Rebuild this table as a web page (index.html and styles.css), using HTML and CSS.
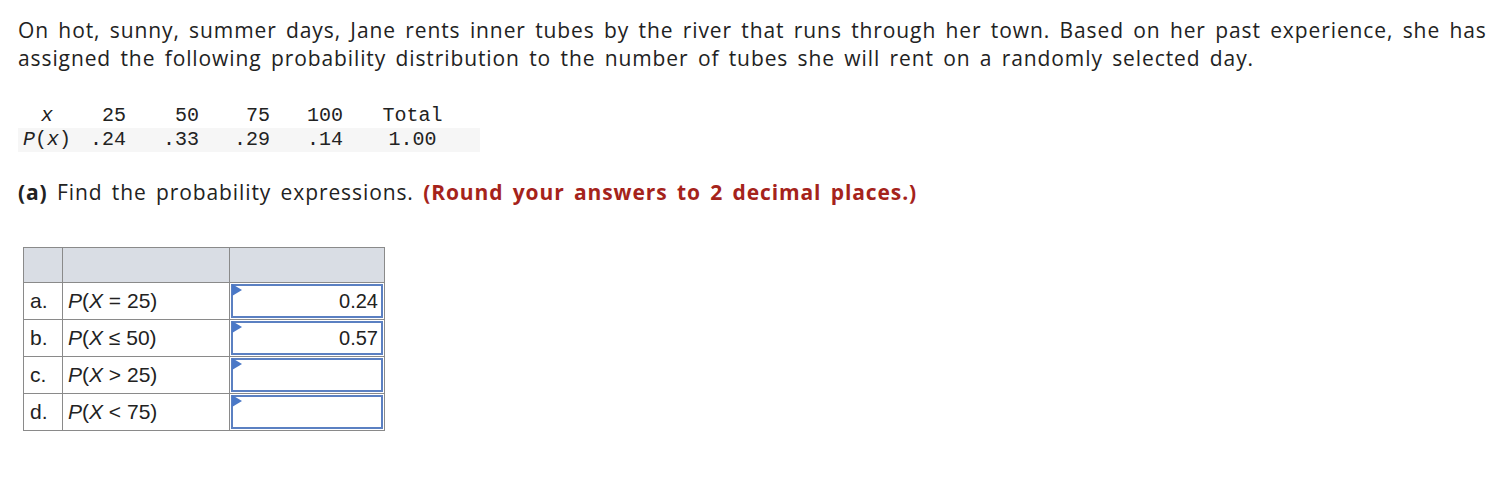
FILE: index.html
```html
<!DOCTYPE html>
<html>
<head>
<meta charset="utf-8">
<link rel="stylesheet" href="styles.css">
</head>
<body>
<div class="page">
  <p class="intro">On hot, sunny, summer days, Jane rents inner tubes by the river that runs through her town. Based on her past experience, she has assigned the following probability distribution to the number of tubes she will rent on a randomly selected day.</p>

  <div class="dist">
    <div class="drow">
      <span class="c0"><i>x</i></span>
      <span class="num">25</span>
      <span class="num">50</span>
      <span class="num">75</span>
      <span class="num">100</span>
      <span class="tot">Total</span>
    </div>
    <div class="drow shaded">
      <span class="c0"><i>P</i>(<i>x</i>)</span>
      <span class="num">.24</span>
      <span class="num">.33</span>
      <span class="num">.29</span>
      <span class="num">.14</span>
      <span class="tot">1.00</span>
    </div>
  </div>

  <p class="question"><b>(a)</b> Find the probability expressions. <b class="red">(Round your answers to 2 decimal places.)</b></p>

  <table class="answers">
    <tr class="head"><th></th><th></th><th></th></tr>
    <tr>
      <td class="lbl">a.</td>
      <td class="expr"><i>P</i>(<i>X</i> = 25)</td>
      <td class="inp"><div class="box"><span class="flag"></span>0.24</div></td>
    </tr>
    <tr>
      <td class="lbl">b.</td>
      <td class="expr"><i>P</i>(<i>X</i> ≤ 50)</td>
      <td class="inp"><div class="box"><span class="flag"></span>0.57</div></td>
    </tr>
    <tr>
      <td class="lbl">c.</td>
      <td class="expr"><i>P</i>(<i>X</i> &gt; 25)</td>
      <td class="inp"><div class="box"><span class="flag"></span></div></td>
    </tr>
    <tr>
      <td class="lbl">d.</td>
      <td class="expr"><i>P</i>(<i>X</i> &lt; 75)</td>
      <td class="inp"><div class="box"><span class="flag"></span></div></td>
    </tr>
  </table>
</div>
</body>
</html>
```

FILE: styles.css
```css
html, body {
  margin: 0;
  padding: 0;
  background: #fff;
}
.page {
  padding: 16px 0 0 18px;
  font-family: "Open Sans", "Liberation Sans", sans-serif;
  color: #222;
}
.intro {
  margin: 0;
  font-size: 21px;
  line-height: 28px;
  letter-spacing: 0.9px;
  word-spacing: 3px;
  width: 1475px;
}
.dist {
  margin-top: 32px;
  width: 462px;
  font-family: "Liberation Mono", monospace;
  font-size: 20px;
  color: #222;
}
.drow {
  display: grid;
  grid-template-columns: 58px 70px 73px 71px 73px 117px;
  height: 24px;
  line-height: 24px;
}
.drow.shaded {
  background: #f6f6f6;
}
.c0 {
  text-align: center;
}
.num {
  text-align: right;
  padding-right: 20px;
}
.tot {
  text-align: center;
  padding-right: 18px;
}
.question {
  margin: 26px 0 0 0;
  font-size: 21px;
  line-height: 28px;
  letter-spacing: 0.9px;
  word-spacing: 3px;
}
.question b {
  font-weight: 700;
}
.red {
  color: #a5231b;
}
.answers {
  margin: 41px 0 0 5px;
  border-collapse: collapse;
  font-family: "Liberation Sans", Arial, sans-serif;
  font-size: 21px;
  color: #222;
}
.answers td, .answers th {
  border: 1px solid #8a8a8a;
  padding: 0;
  height: 34px;
}
.answers .head th {
  background: #d9dde4;
  height: 34px;
}
.answers th:nth-child(1) { width: 38px; }
.answers th:nth-child(2) { width: 166px; }
.answers th:nth-child(3) { width: 154px; }
.lbl {
  padding-left: 6px !important;
}
.expr {
  padding-left: 5px !important;
}
.inp {
  padding: 1px !important;
}
.box {
  position: relative;
  box-sizing: border-box;
  height: 34px;
  border: 2px solid #5b80c2;
  text-align: right;
  line-height: 30px;
  padding-right: 3px;
  font-size: 20px;
}
.flag {
  position: absolute;
  left: -1px;
  top: -2px;
  width: 0;
  height: 0;
  border-top: 6px solid transparent;
  border-bottom: 6px solid transparent;
  border-left: 10px solid #4a78c7;
}
```
